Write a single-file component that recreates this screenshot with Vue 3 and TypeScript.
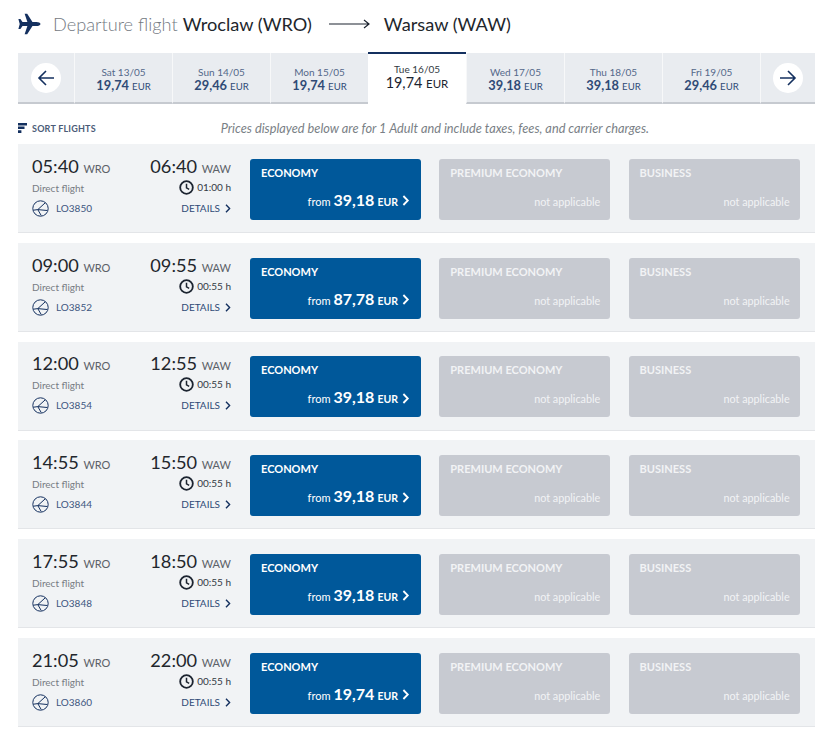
<script setup lang="ts">
interface Day { label: string; price: string; active?: boolean }
interface Flight { dep: string; arr: string; dur: string; no: string; price: string }

const days: Day[] = [
  { label: 'Sat 13/05', price: '19,74' },
  { label: 'Sun 14/05', price: '29,46' },
  { label: 'Mon 15/05', price: '19,74' },
  { label: 'Tue 16/05', price: '19,74', active: true },
  { label: 'Wed 17/05', price: '39,18' },
  { label: 'Thu 18/05', price: '39,18' },
  { label: 'Fri 19/05', price: '29,46' },
]

const flights: Flight[] = [
  { dep: '05:40', arr: '06:40', dur: '01:00 h', no: 'LO3850', price: '39,18' },
  { dep: '09:00', arr: '09:55', dur: '00:55 h', no: 'LO3852', price: '87,78' },
  { dep: '12:00', arr: '12:55', dur: '00:55 h', no: 'LO3854', price: '39,18' },
  { dep: '14:55', arr: '15:50', dur: '00:55 h', no: 'LO3844', price: '39,18' },
  { dep: '17:55', arr: '18:50', dur: '00:55 h', no: 'LO3848', price: '39,18' },
  { dep: '21:05', arr: '22:00', dur: '00:55 h', no: 'LO3860', price: '19,74' },
]
</script>

<template>
  <main class="page">
    <header class="title">
      <svg class="plane" width="23" height="24" viewBox="0 0 24 24" aria-hidden="true">
        <path d="M23.5 12c0-1.3-2.2-2.2-4.2-2.2h-4.2L9.6 1.2H6.9l2.9 8.6H4.7L2.5 6.9H.4L1.8 12 .4 17.1h2.1l2.2-2.9h5.1l-2.9 8.6h2.7l5.5-8.6h4.2c2 0 4.2-.9 4.2-2.2z" fill="#14305f" />
      </svg>
      <span class="muted">Departure flight</span>
      <span class="city">Wroclaw (WRO)</span>
      <svg class="long-arrow" width="42" height="12" viewBox="0 0 42 12" aria-hidden="true">
        <path d="M0 6h40M35 2l5 4-5 4" fill="none" stroke="#1c2430" stroke-width="1.2" />
      </svg>
      <span class="city">Warsaw (WAW)</span>
    </header>

    <nav class="strip">
      <div class="nav-cell prev">
        <span class="round">
          <svg width="20" height="20" viewBox="0 0 20 20" aria-hidden="true">
            <path d="M18 10H3M10 3l-7 7 7 7" fill="none" stroke="#14305f" stroke-width="1.6" />
          </svg>
        </span>
      </div>
      <div v-for="d in days" :key="d.label" class="day" :class="{ active: d.active }">
        <span class="day-label">{{ d.label }}</span>
        <span class="day-price">{{ d.price }} <small>EUR</small></span>
      </div>
      <div class="nav-cell next">
        <span class="round">
          <svg width="20" height="20" viewBox="0 0 20 20" aria-hidden="true">
            <path d="M2 10h15M10 3l7 7-7 7" fill="none" stroke="#14305f" stroke-width="1.6" />
          </svg>
        </span>
      </div>
    </nav>

    <div class="info">
      <div class="sort">
        <svg width="9" height="10" viewBox="0 0 9 10" aria-hidden="true">
          <path d="M0 0h9v2.4H0zM0 3.6h6.5V6H0zM0 7.2h3.4V10H0z" fill="#14305f" />
        </svg>
        <span>SORT FLIGHTS</span>
      </div>
      <p class="note">Prices displayed below are for 1 Adult and include taxes, fees, and carrier charges.</p>
    </div>

    <section class="list">
      <article v-for="f in flights" :key="f.no" class="row">
        <div class="meta">
          <div class="side">
            <div class="time">{{ f.dep }} <small>WRO</small></div>
            <div class="direct">Direct flight</div>
            <div class="carrier">
              <svg width="17" height="17" viewBox="0 0 17 17" aria-hidden="true">
                <circle cx="8.5" cy="8.5" r="7.7" fill="none" stroke="#14305f" stroke-width="1" />
                <path d="M13 3L5.8 9.6l9.4.9M5.8 9.6L1.4 10.2M5.8 9.6l3.4 5.9" fill="none" stroke="#14305f" stroke-width="1" />
              </svg>
              <span>{{ f.no }}</span>
            </div>
          </div>
          <div class="side right">
            <div class="time">{{ f.arr }} <small>WAW</small></div>
            <div class="duration">
              <svg width="15" height="15" viewBox="0 0 14 14" aria-hidden="true">
                <circle cx="7" cy="7" r="5.9" fill="none" stroke="#1c2430" stroke-width="1.7" />
                <path d="M7 3.5V7.4l2.5 1.4" fill="none" stroke="#1c2430" stroke-width="1.4" />
              </svg>
              <span>{{ f.dur }}</span>
            </div>
            <div class="details">
              DETAILS
              <svg width="6" height="9" viewBox="0 0 6 9" aria-hidden="true">
                <path d="M1 .8l3.6 3.7L1 8.2" fill="none" stroke="#14305f" stroke-width="1.4" />
              </svg>
            </div>
          </div>
        </div>
        <div class="card eco">
          <div class="cabin">ECONOMY</div>
          <div class="fare">
            <span class="from">from</span>
            <strong>{{ f.price }}</strong>
            <span class="eur">EUR</span>
            <svg width="8" height="11" viewBox="0 0 8 11" aria-hidden="true">
              <path d="M1.4 1l4.4 4.5L1.4 10" fill="none" stroke="#fff" stroke-width="1.8" />
            </svg>
          </div>
        </div>
        <div class="card off">
          <div class="cabin">PREMIUM ECONOMY</div>
          <div class="fare na">not applicable</div>
        </div>
        <div class="card off">
          <div class="cabin">BUSINESS</div>
          <div class="fare na">not applicable</div>
        </div>
      </article>
    </section>
  </main>
</template>

<style>
html, body { margin: 0; background: #fff; }
</style>

<style scoped>
.page {
  width: 797px;
  height: 748px;
  margin-left: 18px;
  font-family: Lato, "Open Sans", sans-serif;
  color: #1c2430;
  overflow: hidden;
}
.title {
  height: 52px;
  box-sizing: border-box;
  padding-bottom: 5px;
  display: flex;
  align-items: center;
  font-size: 18.2px;
  font-weight: 400;
}
.plane { margin-right: 12px; flex: none; }
.muted { color: #747a82; font-weight: 300; margin-right: 5px; }
.long-arrow { margin: 0 13px 0 17px; }
.city { color: #22262c; }

.strip {
  display: flex;
  height: 52px;
  align-items: stretch;
}
.nav-cell {
  width: 56px;
  height: 51px;
  margin-top: 1px;
  background: #e9ecf0;
  border-bottom: 2px solid #c6cad0;
  box-sizing: border-box;
  display: flex;
  align-items: center;
  justify-content: center;
}
.nav-cell.next { width: 55px; border-left: 1px solid #f7f8f9; }
.round {
  width: 30px;
  height: 30px;
  border-radius: 50%;
  background: #fff;
  display: flex;
  align-items: center;
  justify-content: center;
}
.day {
  width: 98px;
  height: 51px;
  margin-top: 1px;
  background: #e9ecf0;
  border-bottom: 2px solid #c6cad0;
  border-left: 1px solid #f7f8f9;
  box-sizing: border-box;
  display: flex;
  flex-direction: column;
  align-items: center;
  padding-top: 13px;
  color: #3d5680;
}
.day-label { font-size: 10px; line-height: 12px; color: #54688a; }
.day-price { font-size: 12.8px; font-weight: 700; line-height: 14px; color: #2f4a76; }
.day-price small { font-size: 9.6px; font-weight: 400; }
.day.active {
  margin-top: 0;
  height: 52px;
  background: #fff;
  border: 0;
  border-top: 2px solid #14305f;
  padding-top: 9px;
}
.day.active .day-label { color: #333a44; }
.day.active .day-price { color: #1c2430; font-weight: 400; font-size: 14.4px; line-height: 15px; }
.day.active .day-price small { font-size: 11.5px; }

.info {
  display: flex;
  align-items: center;
  height: 40px;
  box-sizing: border-box;
  padding-top: 8px;
  justify-content: space-between;
}
.sort {
  display: flex;
  align-items: center;
  gap: 5px;
  font-size: 9px;
  font-weight: 700;
  color: #4b5c78;
  letter-spacing: .2px;
}
.note {
  margin: 0;
  padding-right: 166px;
  font-size: 12.75px;
  font-style: italic;
  color: #7a7f86;
}

.list { display: flex; flex-direction: column; gap: 9.8px; }
.row {
  height: 89px;
  box-sizing: border-box;
  background: #f1f3f5;
  border-bottom: 1px solid #e3e5e8;
  padding: 14.8px 15px 0 14px;
  display: flex;
  align-items: flex-start;
}
.meta {
  width: 199px;
  margin-right: 19px;
  display: flex;
  justify-content: space-between;
}
.side { display: flex; flex-direction: column; margin-top: -2px; }
.side.right { align-items: flex-end; }
.time { font-size: 18.2px; line-height: 19px; color: #22262c; white-space: nowrap; }
.time small { font-size: 11px; color: #5c6168; }
.direct { font-size: 10px; line-height: 13px; margin-top: 4px; color: #777c83; }
.carrier {
  display: flex;
  align-items: center;
  gap: 7px;
  font-size: 10px;
  color: #3d5680;
  margin-top: 5px;
  line-height: 17px;
}
.duration {
  display: flex;
  align-items: center;
  gap: 3px;
  font-size: 10px;
  color: #333a44;
  line-height: 15px;
  margin-top: 2px;
}
.details {
  display: flex;
  align-items: center;
  gap: 5px;
  font-size: 10px;
  color: #2f4a76;
  margin-top: 7px;
  line-height: 13px;
}
.card {
  width: 171px;
  height: 61px;
  flex: none;
  box-sizing: border-box;
  border-radius: 3px;
  padding: 7px 11px 0;
  color: #fff;
  display: flex;
  flex-direction: column;
  margin-right: 18.3px;
}
.card:last-child { margin-right: 0; }
.eco { background: #00589a; }
.off { background: #c7cad1; color: #f2f3f5; }
.cabin { font-size: 11px; font-weight: 700; line-height: 13px; }
.fare {
  display: flex;
  align-items: baseline;
  justify-content: flex-end;
  margin-top: 10px;
  line-height: 22px;
}
.from { font-size: 11px; margin-right: 3px; }
.fare strong { font-size: 16px; font-weight: 700; margin-right: 3px; }
.eur { font-size: 10.5px; font-weight: 700; margin-right: 4px; }
.fare svg { align-self: center; }
.na { font-size: 10.8px; margin-top: 12px; margin-right: -1px; line-height: 22px; }
</style>
